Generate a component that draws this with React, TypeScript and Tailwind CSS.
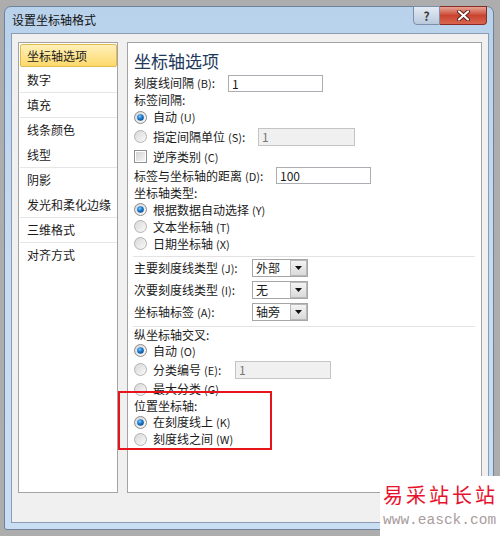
import React from "react";

const sideItems = [
  { t: "坐标轴选项", sel: true },
  { t: "数字", sep: true },
  { t: "填充", sep: true },
  { t: "线条颜色" },
  { t: "线型", sep: true },
  { t: "阴影" },
  { t: "发光和柔化边缘", sep: true },
  { t: "三维格式", sep: true },
  { t: "对齐方式" },
];

function Mn({ c }: { c: string }) {
  return <span className="ml-[3px] text-[11px]">({c})</span>;
}

function Radio({ checked }: { checked?: boolean }) {
  return (
    <svg width="13" height="13" viewBox="0 0 13 13" className="shrink-0">
      <defs>
        <linearGradient id="rfill" x1="0" y1="0" x2="1" y2="1">
          <stop offset="0" stopColor="#d6d6d6" />
          <stop offset="1" stopColor="#fbfbfb" />
        </linearGradient>
        <radialGradient id="rdot" cx="0.4" cy="0.35" r="0.7">
          <stop offset="0" stopColor="#8fd0ff" />
          <stop offset="0.45" stopColor="#1d7fd6" />
          <stop offset="1" stopColor="#0b4a8c" />
        </radialGradient>
      </defs>
      <circle cx="6.5" cy="6.5" r="6" fill="url(#rfill)" stroke={checked ? "#8a8a8a" : "#b3b3b3"} />
      {checked && <circle cx="6.5" cy="6.5" r="3.3" fill="url(#rdot)" />}
    </svg>
  );
}

function Check() {
  return (
    <span className="flex h-[13px] w-[13px] shrink-0 border border-[#8e8f8f] bg-white p-[1px]">
      <span className="flex-1 bg-gradient-to-br from-[#d2d2d2] to-[#f6f6f6]" />
    </span>
  );
}

function Select({ value }: { value: string }) {
  return (
    <div className="flex h-[18px] w-[56px] border border-[#a6a6a6] bg-white">
      <span className="flex-1 pl-[3px] leading-[16px]">{value}</span>
      <span className="flex w-[17px] items-center justify-center border border-[#b9b9b9] bg-gradient-to-b from-[#f3f3f3] to-[#dadada]">
        <svg width="7" height="4" viewBox="0 0 7 4">
          <path d="M0 0h7L3.5 4z" fill="#111" />
        </svg>
      </span>
    </div>
  );
}

export default function App() {
  return (
    <div className="relative h-[536px] w-[500px] overflow-hidden bg-[#adadad] pl-[4px] pt-[6px] font-['Noto_Sans_CJK_SC',sans-serif] text-[12px] text-[#1b1b1b]">
      {/* window */}
      <div className="flex h-[524px] w-[490px] flex-col rounded-t-[7px] rounded-b-[3px] border border-[#6e829c] bg-gradient-to-b from-[#b9d2ec] via-[#c6dcf2] to-[#c9def3]">
        <div className="flex h-[26px] items-start justify-between pl-[7px] pr-[6px]">
          <span className="pt-[5px] leading-[16px] text-[#111]">设置坐标轴格式</span>
          <div className="-mt-px flex">
            <span className="flex h-[19px] w-[27px] items-center justify-center rounded-bl-[4px] border border-[#7d8ea6] bg-gradient-to-b from-[#e3ebf4] to-[#b9c9dc] text-[12px] font-bold leading-none text-[#3b3b3b]">
              ?
            </span>
            <span className="flex h-[19px] w-[47px] items-center justify-center rounded-br-[4px] border border-l-0 border-[#8a2a22] bg-gradient-to-b from-[#e5a397] via-[#c9432f] to-[#d9664f]">
              <svg width="13" height="11" viewBox="0 0 13 11">
                <path d="M2 1.5l9 8M11 1.5l-9 8" stroke="#5b1d17" strokeWidth="4" strokeLinecap="round" />
                <path d="M2 1.5l9 8M11 1.5l-9 8" stroke="#fff" strokeWidth="2.2" strokeLinecap="round" />
              </svg>
            </span>
          </div>
        </div>
        <div className="flex flex-1 px-[6px] pb-[6px]">
          <div className="flex flex-1 gap-[9px] border border-[#8a9bb2] bg-[#f0f0f0] pb-[29px] pl-[6px] pr-[6px] pt-[8px]">
            {/* left list */}
            <div className="w-[100px] border border-[#a3a3a3] bg-white">
              {sideItems.map((it) =>
                it.sel ? (
                  <div key={it.t} className="h-[25px] py-px pl-px">
                    <div className="flex h-[23px] items-center rounded-[2px] border border-[#e0bb52] bg-gradient-to-b from-[#fff0b8] to-[#fdd96a] pl-[6px]">
                      {it.t}
                    </div>
                  </div>
                ) : (
                  <div key={it.t} className="flex h-[25px] flex-col">
                    <div className="flex flex-1 items-center pl-[8px]">{it.t}</div>
                    <div className={it.sep ? "ml-px h-px bg-[#e6e6e6]" : "h-px"} />
                  </div>
                )
              )}
            </div>

            {/* right options */}
            <div className="flex w-[355px] flex-col border border-[#a3a3a3] bg-white pl-[6px]">
              <div className="h-[31px] pt-[4px] text-[17px] leading-[27px] text-[#1e395b]">坐标轴选项</div>
              <div className="flex h-[18px] items-center">
                <span className="w-[94px]">
                  刻度线间隔<Mn c="B" />:
                </span>
                <span className="h-[17px] w-[95px] border border-[#abadb3] bg-white pl-[3px] leading-[15px]">1</span>
              </div>
              <div className="flex h-[16px] items-center">标签间隔:</div>
              <div className="flex h-[18px] items-center gap-[6px]">
                <Radio checked />
                <span>
                  自动<Mn c="U" />
                </span>
              </div>
              <div className="flex h-[21px] items-center">
                <Radio />
                <span className="ml-[6px] w-[105px]">
                  指定间隔单位<Mn c="S" />:
                </span>
                <span className="h-[18px] w-[97px] border border-[#c4c4c4] bg-[#f0f0f0] pl-[3px] leading-[16px] text-[#777]">1</span>
              </div>
              <div className="flex h-[19px] items-center gap-[6px]">
                <Check />
                <span>
                  逆序类别<Mn c="C" />
                </span>
              </div>
              <div className="flex h-[19px] items-center">
                <span className="w-[142px]">
                  标签与坐标轴的距离<Mn c="D" />:
                </span>
                <span className="h-[17px] w-[95px] border border-[#abadb3] bg-white pl-[3px] leading-[15px]">100</span>
              </div>
              <div className="flex h-[16px] items-center">坐标轴类型:</div>
              <div className="flex h-[17px] items-center gap-[6px]">
                <Radio checked />
                <span>
                  根据数据自动选择<Mn c="Y" />
                </span>
              </div>
              <div className="flex h-[17px] items-center gap-[6px]">
                <Radio />
                <span>
                  文本坐标轴<Mn c="T" />
                </span>
              </div>
              <div className="flex h-[17px] items-center gap-[6px]">
                <Radio />
                <span>
                  日期坐标轴<Mn c="X" />
                </span>
              </div>
              <div className="mr-[6px] h-[7px] pt-[4px]">
                <div className="-ml-px h-px bg-[#e3e3e3]" />
              </div>
              <div className="flex h-[22px] items-start">
                <span className="w-[118px] leading-[18px]">
                  主要刻度线类型<Mn c="J" />:
                </span>
                <Select value="外部" />
              </div>
              <div className="flex h-[22px] items-start">
                <span className="w-[118px] leading-[18px]">
                  次要刻度线类型<Mn c="I" />:
                </span>
                <Select value="无" />
              </div>
              <div className="flex h-[22px] items-start">
                <span className="w-[118px] leading-[18px]">
                  坐标轴标签<Mn c="A" />:
                </span>
                <Select value="轴旁" />
              </div>
              <div className="mr-[6px] h-[2px] pt-px">
                <div className="-ml-px h-px bg-[#e3e3e3]" />
              </div>
              <div className="flex h-[15px] items-center">纵坐标轴交叉:</div>
              <div className="flex h-[17px] items-center gap-[6px]">
                <Radio checked />
                <span>
                  自动<Mn c="O" />
                </span>
              </div>
              <div className="flex h-[21px] items-center">
                <Radio />
                <span className="ml-[6px] w-[82px]">
                  分类编号<Mn c="E" />:
                </span>
                <span className="h-[18px] w-[96px] border border-[#c4c4c4] bg-[#f0f0f0] pl-[3px] leading-[16px] text-[#777]">1</span>
              </div>
              <div className="flex h-[18px] items-center gap-[6px]">
                <Radio />
                <span>
                  最大分类<Mn c="G" />
                </span>
              </div>
              <div className="flex h-[16px] items-center">位置坐标轴:</div>
              <div className="flex h-[16px] items-center gap-[6px]">
                <Radio checked />
                <span>
                  在刻度线上<Mn c="K" />
                </span>
              </div>
              <div className="flex h-[18px] items-center gap-[6px]">
                <Radio />
                <span>
                  刻度线之间<Mn c="W" />
                </span>
              </div>
            </div>
          </div>
        </div>
      </div>

      {/* annotation */}
      <div className="absolute left-[118px] top-[391px] h-[59px] w-[154px] border-2 border-[#e8141c]" />

      {/* watermark */}
      <div className="absolute bottom-0 right-0 flex h-[60px] w-[120px] flex-col bg-white pl-[3px]">
        <span className="pt-[6px] text-[20px] leading-[26px] tracking-[3px] text-[#e8112d]">易采站长站</span>
        <span className="pt-[2px] font-['Liberation_Mono',monospace] text-[14.5px] leading-[20px] text-[#a99c9e]">www.easck.com</span>
      </div>
    </div>
  );
}
